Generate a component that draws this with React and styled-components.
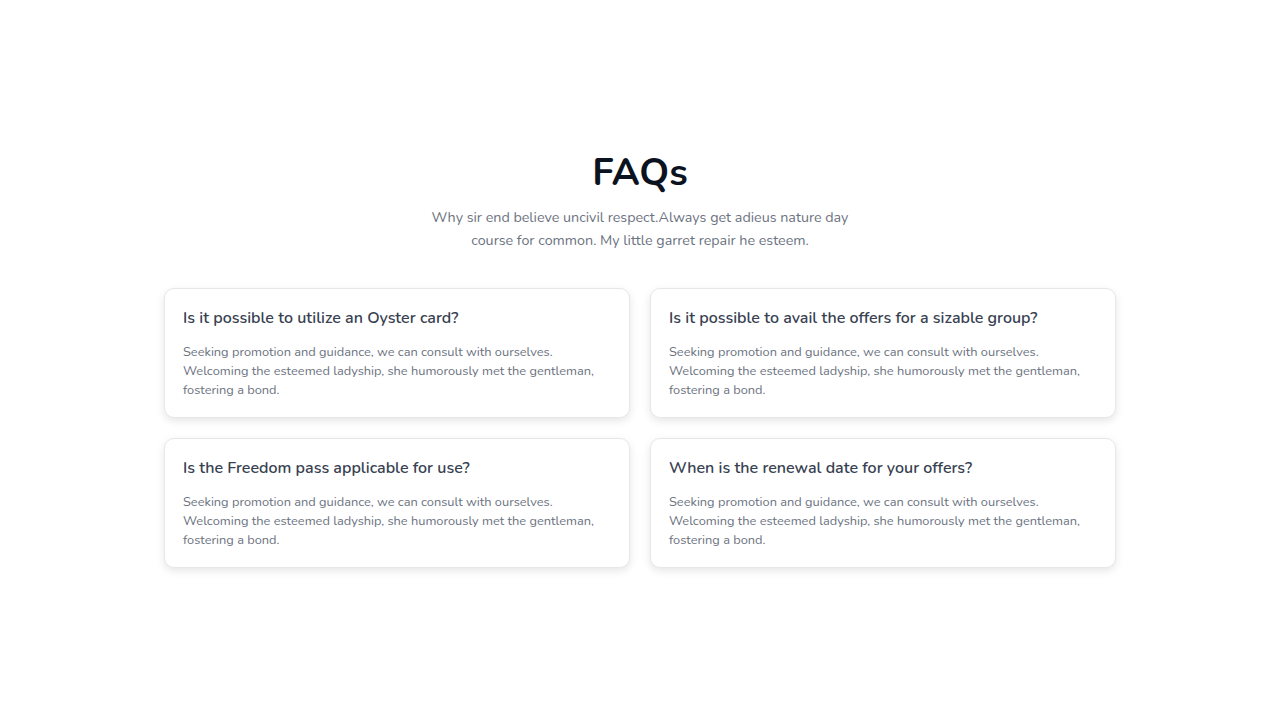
import React from 'react';
import styled, { createGlobalStyle } from 'styled-components';

const GlobalStyle = createGlobalStyle`
    * {
        box-sizing: border-box;
    }
    body {
        margin: 0;
        background: #fff;
        font-family: "Nunito", Lato, "Noto Sans", sans-serif;
    }
`
const Wrapper = styled.section`
    width: 100%;
    min-height: 100vh;
    display: flex;
    flex-direction: column;
    align-items: center;
    padding-top: 148px;
`
const Title = styled.h1`
    margin: 0;
    font-size: 38px;
    line-height: 50px;
    font-weight: 700;
    color: #0b1220;
`
const Sub = styled.p`
    margin: 8px 0 0 0;
    max-width: 430px;
    text-align: center;
    font-size: 14.3px;
    line-height: 23px;
    color: #6b7280;
`
const Grid = styled.div`
    margin-top: 36px;
    width: 952px;
    display: grid;
    grid-template-columns: 1fr 1fr;
    gap: 20px;
`
const Card = styled.div`
    background: #fff;
    border: 1px solid #e5e7eb;
    border-radius: 10px;
    box-shadow: 0 3px 8px rgba(0, 0, 0, 0.1);
    padding: 17px 18px 17px 18px;
`
const Question = styled.h3`
    margin: 0;
    font-size: 16px;
    line-height: 24px;
    font-weight: 600;
    color: #374151;
`
const Answer = styled.p`
    margin: 13px 0 0 0;
    font-size: 12.8px;
    line-height: 19px;
    color: #6b7280;
`

const answer = 'Seeking promotion and guidance, we can consult with ourselves. Welcoming the esteemed ladyship, she humorously met the gentleman, fostering a bond.';

const faqs = [
    { id: 1, question: 'Is it possible to utilize an Oyster card?' },
    { id: 2, question: 'Is it possible to avail the offers for a sizable group?' },
    { id: 3, question: 'Is the Freedom pass applicable for use?' },
    { id: 4, question: 'When is the renewal date for your offers?' },
];

const App = () => {
    return (
        <Wrapper>
            <GlobalStyle />
            <Title>FAQs</Title>
            <Sub>Why sir end believe uncivil respect.Always get adieus nature day course for common. My little garret repair he esteem.</Sub>
            <Grid>
                {faqs.map(item => (
                    <Card key={item.id}>
                        <Question>{item.question}</Question>
                        <Answer>{answer}</Answer>
                    </Card>
                ))}
            </Grid>
        </Wrapper>
    );
};

export default App;
